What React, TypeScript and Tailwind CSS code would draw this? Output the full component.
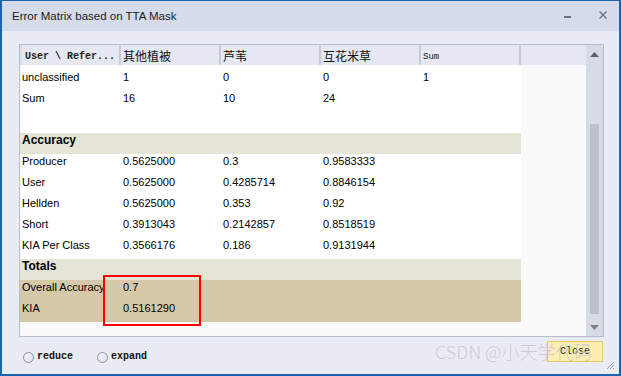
import React from 'react';

type Row = {
  label: string;
  vals?: string[];
  kind?: 'band' | 'tan' | 'blank';
  first?: boolean;
};

const rows: Row[] = [
  { label: 'unclassified', vals: ['1', '0', '0', '1'], first: true },
  { label: 'Sum', vals: ['16', '10', '24', ''] },
  { label: '', kind: 'blank' },
  { label: 'Accuracy', kind: 'band' },
  { label: 'Producer', vals: ['0.5625000', '0.3', '0.9583333', ''] },
  { label: 'User', vals: ['0.5625000', '0.4285714', '0.8846154', ''] },
  { label: 'Hellden', vals: ['0.5625000', '0.353', '0.92', ''] },
  { label: 'Short', vals: ['0.3913043', '0.2142857', '0.8518519', ''] },
  { label: 'KIA Per Class', vals: ['0.3566176', '0.186', '0.9131944', ''] },
  { label: 'Totals', kind: 'band' },
  { label: 'Overall Accuracy', vals: ['0.7', '', '', ''], kind: 'tan' },
  { label: 'KIA', vals: ['0.5161290', '', '', ''], kind: 'tan' },
];

const cjk = "font-['Noto_Sans_CJK_SC',sans-serif]";
const sans = "font-['Liberation_Sans',Arial,sans-serif]";
const mono = "font-['Liberation_Mono',monospace]";

function Radio({ label }: { label: string }) {
  return (
    <div className="flex items-center gap-[3px]">
      <span className="w-[11px] h-[11px] rounded-full border border-[#8a919e] bg-gradient-to-br from-[#f4f5f8] to-[#dfe2ea]" />
      <span className={`${mono} text-[10px] leading-[12px] text-[#111] font-bold`}>{label}</span>
    </div>
  );
}

function DataRow({ row }: { row: Row }) {
  const bg =
    row.kind === 'band' ? 'bg-[#e4e5d6]' : row.kind === 'tan' ? 'bg-[#d6c9a9]' : 'bg-white';
  const h = row.first ? 'h-[26px] pt-[5px]' : 'h-[21px] pt-0';
  if (row.kind === 'band') {
    return (
      <div className={`${bg} ${h} w-[501px] pl-[2px] ${sans} text-[12px] font-bold leading-[14px] text-black`}>
        {row.label}
      </div>
    );
  }
  return (
    <div className={`${bg} ${h} w-[501px] flex ${sans} text-[11px] leading-[14px] text-black`}>
      <div className="w-[101px] pl-[2px] whitespace-nowrap overflow-hidden">{row.label}</div>
      {(row.vals ?? ['', '', '', '']).map((v, i) => (
        <div key={i} className="w-[100px] pl-[2px] whitespace-nowrap">
          {v}
        </div>
      ))}
    </div>
  );
}

export default function App() {
  const heads = ['其他植被', '芦苇', '互花米草'];
  return (
    <div className="w-[621px] h-[376px] relative overflow-hidden flex flex-col bg-[#e9ecf5] border-x-2 border-t border-b-2 border-[#1c64b0]">
      {/* title bar */}
      <div className="h-[30px] shrink-0 bg-[#d6dbe9] flex items-center justify-between pl-[10px] pr-[12px]">
        <span className={`${sans} text-[11.5px] text-[#1b1b1b] pt-[2px]`}>Error Matrix based on TTA Mask</span>
        <div className="flex items-center gap-[28px] pb-[2px]">
          <span className="w-[7px] h-[2px] bg-[#6b7280] mt-[4px]" />
          <svg width="8" height="8" viewBox="0 0 8 8">
            <path d="M0.5 0.5 L7.5 7.5 M7.5 0.5 L0.5 7.5" stroke="#6b7280" strokeWidth="1.4" />
          </svg>
        </div>
      </div>

      {/* grid */}
      <div className="mt-[13px] ml-[17px] w-[585px] h-[293px] shrink-0 border border-[#b7bdc9] flex">
        <div className="flex flex-col w-[566px]">
          {/* header */}
          <div className="h-[20px] flex bg-[#e5e8f2] shrink-0 border-l-2 border-[#d9dce6]">
            <div className={`w-[99px] border-r-2 border-[#c6cad5] pl-[3px] pt-[6px] ${mono} text-[10px] leading-[12px] font-bold text-[#222]`}>
              User \ Refer...
            </div>
            {heads.map((h) => (
              <div key={h} className={`w-[100px] border-r-2 border-[#c6cad5] pl-[2px] pt-[3px] ${cjk} text-[12px] leading-[16px] text-[#111]`}>
                {h}
              </div>
            ))}
            <div className={`w-[100px] border-r-2 border-[#c6cad5] pl-[2px] pt-[6px] ${mono} text-[9px] leading-[12px] text-[#222]`}>
              Sum
            </div>
            <div className="flex-1" />
          </div>
          <div className="flex flex-1">
            <div className="flex flex-col w-[501px]">
              {rows.map((r, i) => (
                <DataRow key={i} row={r} />
              ))}
              <div className="flex-1 bg-[#fafafa]" />
            </div>
            <div className="flex-1 bg-[#fafafa]" />
          </div>
        </div>
        {/* scrollbar */}
        <div className="w-[17px] bg-[#d7dbe8] flex flex-col items-center pt-[7px] pb-[6px]">
          <svg width="9" height="5" viewBox="0 0 9 5">
            <path d="M4.5 0 L9 5 L0 5 Z" fill="#606060" />
          </svg>
          <div className="mt-[67px] w-[9px] h-[190px] bg-[#bcc0c9]" />
          <div className="flex-1" />
          <svg width="9" height="5" viewBox="0 0 9 5">
            <path d="M0 0 L9 0 L4.5 5 Z" fill="#808080" />
          </svg>
        </div>
      </div>

      {/* bottom */}
      <div className="flex-1 flex justify-between">
        <div className="flex gap-[24px] pl-[21px] mt-[14px] self-start">
          <Radio label="reduce" />
          <Radio label="expand" />
        </div>
        <button className={`mt-[4px] mr-[16px] self-start w-[56px] h-[21px] bg-[#fcefb0] border border-[#e3c468] ${mono} text-[10px] text-[#222]`}>
          Close
        </button>
      </div>

      {/* red annotation box */}
      <div className="absolute left-[101px] top-[274px] w-[98px] h-[51px] border-2 border-[#ff0000]" />

      {/* watermark */}
      <div className={`absolute left-[433px] top-[338px] text-[18px] leading-[24px] text-[#c8c8c8]/90 font-light ${cjk} whitespace-nowrap`}>
        CSDN @小天学代码
      </div>

      {/* resize grip */}
      <svg className="absolute right-[4px] bottom-[4px]" width="10" height="10" viewBox="0 0 10 10">
        <path d="M9 2 L2 9 M9 5 L5 9 M9 8 L8 9" stroke="#9aa0ab" strokeWidth="1" />
      </svg>
    </div>
  );
}
